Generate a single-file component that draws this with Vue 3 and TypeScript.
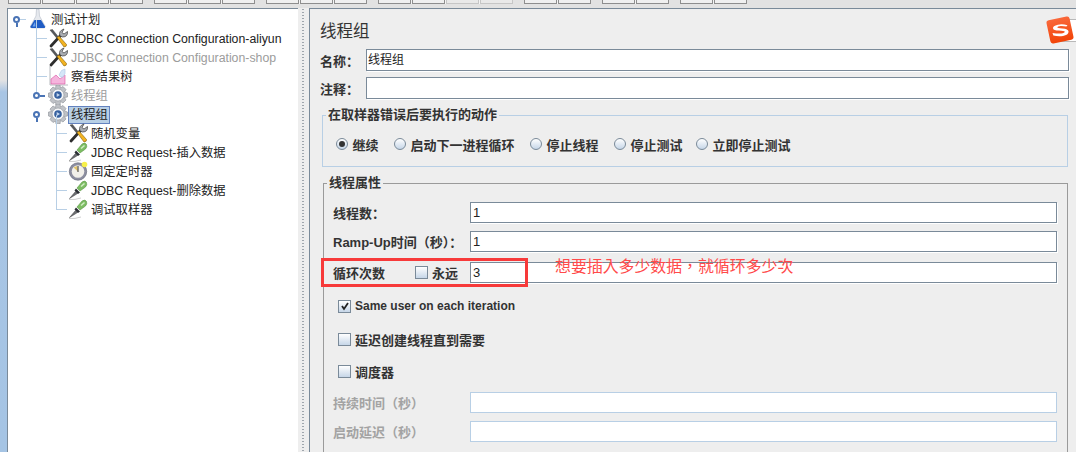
<script setup lang="ts">
interface Node { label: string; icon: string; level: number; muted?: boolean; selected?: boolean; handle?: string; last?: boolean }
const nodes: Node[] = [
  { label: '测试计划', icon: 'flask', level: 0, handle: 'open' },
  { label: 'JDBC Connection Configuration-aliyun', icon: 'tools', level: 1 },
  { label: 'JDBC Connection Configuration-shop', icon: 'tools', level: 1, muted: true },
  { label: '察看结果树', icon: 'chart', level: 1 },
  { label: '线程组', icon: 'gear', level: 1, muted: true, handle: 'closed' },
  { label: '线程组', icon: 'gear', level: 1, selected: true, handle: 'open' },
  { label: '随机变量', icon: 'tools', level: 2 },
  { label: 'JDBC Request-插入数据', icon: 'dropper', level: 2 },
  { label: '固定定时器', icon: 'timer', level: 2 },
  { label: 'JDBC Request-删除数据', icon: 'dropper', level: 2 },
  { label: '调试取样器', icon: 'dropper', level: 2, last: true },
]
const toolbarGroups = [
  [{}, {}, {}, {}],
  [{}, {}, {}],
  [{}, {}, {}],
  [{}, {}, { off: true }, { off: true }],
  [{}, {}],
  [{}, {}],
  [{}, {}],
] as { off?: boolean }[][]
const radios = [
  { label: '继续', on: true, width: 58 },
  { label: '启动下一进程循环', on: false, width: 136 },
  { label: '停止线程', on: false, width: 84 },
  { label: '停止测试', on: false, width: 82 },
  { label: '立即停止测试', on: false, width: 100 },
]
</script>

<template>
  <div class="app">
    <div class="toolbar">
      <div v-for="(g, i) in toolbarGroups" :key="i" class="tb-group">
        <div v-for="(b, j) in g" :key="j" class="tb-btn" :class="{ off: b.off }"></div>
      </div>
    </div>
    <div class="main">
      <div class="strip"></div>
      <div class="tree">
        <div
          v-for="(n, i) in nodes"
          :key="i"
          class="row"
          :class="['lv' + n.level, { last: n.last }]"
        >
          <span v-if="n.level > 0 && !(n.handle === 'open')" class="branch"></span>
          <span v-if="n.handle" class="handle" :class="n.handle"></span>
          <svg class="icon" viewBox="0 0 20 20" width="20" height="20">
            <g v-if="n.icon === 'flask'">
              <path d="M8.500 0h2.500l.5 7 5.500 10q.5 2-1 2H4q-2 0-1.500-2L8 7z" fill="#e6e9ee" stroke="#b4bbc6" stroke-width=".6" />
              <path d="M6.500 11h6.500l4 6.500q.5 1.500-1 1.500H4q-2 0-1.500-1.500z" fill="#1f5cc4" />
              <path d="M7 13l-2.500 4.500h3z" fill="#6fa5ee" />
            </g>
            <g v-else-if="n.icon === 'tools'">
              <path d="M3 18L13 7" stroke="#2e2e2e" stroke-width="2.800" stroke-linecap="round" />
              <path d="M12 8q-2-5 4-7l-2 3.500 2 1.500 3.500-2.500q.5 5.500-5 5.500z" fill="#a9adb3" stroke="#3c3c3c" stroke-width=".7" />
              <path d="M2 2l2.500-.5L10.500 9 9 10.500z" fill="#55585c" stroke="#333" stroke-width=".4" />
              <path d="M9 9.500l2-1.500 7.500 8.500q.5 2-2.500 2.500z" fill="#f3b320" stroke="#80600f" stroke-width=".6" />
            </g>
            <g v-else-if="n.icon === 'chart'">
              <path d="M2 0v19h18" fill="none" stroke="#a3a8ae" stroke-width=".8" />
              <path d="M3 18v-5l5-4 4 4 5-4v9z" fill="#f5b4dd" stroke="#d8509f" stroke-width=".6" />
              <path d="M11 9q2-6 6-6 1 5-2 8-3 1-4-2z" fill="#d5e6f8" stroke="#a7c2e0" stroke-width=".5" />
            </g>
            <g v-else-if="n.icon === 'gear'">
              <path d="M8 0h4l.5 3 2.500-1.500 3 3L16.500 7l3 1v4l-3 .5 1.500 2.500-3 3-2.500-1.500L12 20H8l-.5-3L5 18.500l-3-3L3.500 13l-3-1V8l3-.5L2 5l3-3 2.500 1.500z" fill="#bfc2c7" stroke="#8c9097" stroke-width=".6" />
              <circle cx="10" cy="10" r="6" fill="#f4f5f7" stroke="#8d9299" stroke-width=".6" />
              <circle cx="10" cy="10" r="3.800" fill="#35609f" />
              <path d="M8.700 8v4l3.300-2z" fill="#c3d5ee" />
            </g>
            <g v-else-if="n.icon === 'dropper'">
              <path d="M1 19.500q6 .5 12-1.500" fill="none" stroke="#cfcfcf" stroke-width="1" />
              <path d="M1.500 18.500l6-7 2 2z" fill="#6d6f73" stroke="#3a3a3a" stroke-width=".5" />
              <path d="M6.500 10.500l3.500 3.500 2-1.500-4-4z" fill="#2c2f34" />
              <path d="M9 8l5-6q3-2 4.500.5 1 2-1 4.500l-5.500 4z" fill="#7dbd63" stroke="#4d8a38" stroke-width=".5" />
              <path d="M12.500 6l3.500-3 1 1-3.500 3z" fill="#d3eec6" />
            </g>
            <g v-else>
              <circle cx="10" cy="10.500" r="8.700" fill="#8d8fa1" stroke="#6c6e7e" stroke-width=".7" />
              <circle cx="10" cy="10.500" r="6.300" fill="#f2f0ea" />
              <path d="M10 10.500L5.500 6.500 9 5z" fill="#e2c46a" />
              <path d="M10 5v6" stroke="#444" stroke-width="1.100" />
              <circle cx="16.500" cy="3.500" r="2.800" fill="#f7f04a" />
            </g>
          </svg>
          <span class="label" :class="{ muted: n.muted, selected: n.selected }">{{ n.label }}</span>
        </div>
      </div>
      <div class="splitter"></div>
      <div class="pane">
        <h1 class="title">线程组</h1>
        <div class="name-row">
          <label>名称：</label>
          <div class="input">线程组</div>
        </div>
        <div class="name-row second">
          <label>注释：</label>
          <div class="input"></div>
        </div>
        <fieldset class="group-a">
          <legend>在取样器错误后要执行的动作</legend>
          <div class="radios">
            <div v-for="r in radios" :key="r.label" class="radio" :style="{ width: r.width + 'px' }">
              <span class="dot" :class="{ on: r.on }"></span>{{ r.label }}
            </div>
          </div>
        </fieldset>
        <fieldset class="group-b">
          <legend>线程属性</legend>
          <div class="prop first">
            <label>线程数：</label>
            <div class="input num">1</div>
          </div>
          <div class="prop ramp">
            <label>Ramp-Up时间（秒）：</label>
            <div class="input num">1</div>
          </div>
          <div class="prop loop">
            <label class="loop-label"><span>循环次数</span><span class="forever"><span class="box"></span>永远</span></label>
            <div class="input num">3</div>
          </div>
          <div class="check c1"><span class="box checked"><svg viewBox="0 0 10 10" width="10" height="10"><path d="M2 5l2 3 4-6" fill="none" stroke="#222" stroke-width="1.800" /></svg></span><span class="latin">Same user on each iteration</span></div>
          <div class="check c2"><span class="box"></span>延迟创建线程直到需要</div>
          <div class="check c3"><span class="box"></span>调度器</div>
          <div class="prop dis first-dis">
            <label>持续时间（秒）</label>
            <div class="input"></div>
          </div>
          <div class="prop dis">
            <label>启动延迟（秒）</label>
            <div class="input"></div>
          </div>
        </fieldset>
      </div>
    </div>

    <div class="red-box"></div>
    <div class="note">想要插入多少数据，就循环多少次</div>
    <div class="ime-tab"></div>
    <svg class="ime" viewBox="0 0 28 28" width="30" height="30">
      <defs>
        <linearGradient id="imeGrad" x1="0" y1="0" x2="0" y2="1">
          <stop offset="0" stop-color="#f9683a" />
          <stop offset="1" stop-color="#f24408" />
        </linearGradient>
      </defs>
      <rect x="3" y="3" width="22" height="22" rx="2.500" fill="url(#imeGrad)" transform="rotate(-12 14 14)" />
      <path d="M21 9.500q-5-1.500-9-.5-5 1-4.500 3.500.5 2 5.500 2 5 .2 5.500 1.200 0 1.300-3.500 1.500-3.500.2-8-.5l.8 2.500q5 1 9 .3 5-.8 5.200-3.800 0-2.700-6-3-4.500-.3-4.500-1.200 0-1 3-1.200 2.500-.2 5.500.5z" fill="#fff" />
    </svg>
  </div>
</template>

<style>
html, body { margin: 0; padding: 0; background: #eeeeee; overflow: hidden; }
</style>

<style scoped>
.app {
  position: relative;
  width: 1076px;
  height: 452px;
  overflow: hidden;
  display: flex;
  flex-direction: column;
  background: #eeeeee;
  font-family: "Liberation Sans", "Noto Sans CJK SC", sans-serif;
  color: #222;
}
.toolbar {
  height: 8px;
  flex: none;
  display: flex;
  gap: 11px;
  padding-left: 8px;
  background: #e2e2e2;
  box-sizing: border-box;
}
.tb-group { display: flex; gap: 1px; height: 4px; background: #f4f4f4; }
.tb-btn {
  width: 33px;
  height: 4px;
  box-sizing: border-box;
  background: #f0f0f0;
  border: 1px solid #8e8e8e;
  border-top: none;
}
.tb-btn.off { border-color: #c6c6c6; background: #e9e9e9; }
.main { flex: 1; display: flex; min-height: 0; }
.strip {
  width: 7px;
  flex: none;
  background: linear-gradient(#e3e3e3 0, #e3e3e3 72px, #a8c5e4 84px, #a5c4e4 100%);
}
.tree {
  width: 291px;
  flex: none;
  box-sizing: border-box;
  background: #fff;
  border-top: 1px solid #7a8a99;
  border-left: 1px solid #7a8a99;
  padding-top: 1px;
}
.row {
  position: relative;
  height: 19px;
  display: flex;
  align-items: center;
  font-size: 12.300px;
  white-space: nowrap;
}
.lv0 { padding-left: 20px; }
.lv1 { padding-left: 40px; }
.lv2 { padding-left: 60px; }
.icon { flex: none; margin-top: -1px; }
.label { margin-left: 1px; padding: 1px; line-height: 14px; border: 1px solid transparent; }
.label.muted { color: #9c9c9c; }
.label.selected { background: #b8cfe5; border-color: #6382bf; margin-left: 0; padding-left: 2px; }
.branch { position: absolute; top: -9px; height: 19px; width: 11px; border-bottom: 1px solid #b8cfe5; border-left: 1px solid #b8cfe5; box-sizing: border-box; }
.lv1 .branch { left: 28px; }
.lv2 .branch { left: 48px; }
.row.lv1:nth-child(5) .branch { border-bottom: none; }
.handle { position: absolute; width: 3px; height: 3px; border: 2px solid #4a74b5; border-radius: 50%; background: #fff; top: 6px; box-sizing: content-box; }
.lv0 .handle { left: 5px; }
.lv1 .handle { left: 25px; }
.handle::before { content: ""; position: absolute; }
.handle.closed::before { left: 5px; top: .500px; width: 5px; height: 2px; background: #4a74b5; }
.handle.open::before { left: .500px; top: 5px; width: 2px; height: 4px; background: #4a74b5; }
.lv0 .handle.open::after { content: ""; position: absolute; left: 5px; top: 1px; width: 6px; height: 1px; background: #b8cfe5; }
.splitter {
  width: 11px;
  flex: none;
  box-sizing: border-box;
  background-color: #eeeeee;
  background-image: radial-gradient(circle, #9fa6ad 0.700px, transparent 0.800px);
  background-size: 2px 3px;
  background-position: 5px 0;
  background-repeat: repeat;
  clip-path: inset(0 5px 0 4px);
}
.pane {
  flex: 1;
  min-width: 0;
  box-sizing: border-box;
  border-top: 1px solid #7a8a99;
  border-left: 1px solid #7a8a99;
  padding: 0 7px 0 10px;
  color: #333;
  font-size: 13px;
  font-weight: 700;
}
.title { margin: 10px 0 0; height: 24px; line-height: 24px; font-size: 16.500px; font-weight: 400; }
.name-row { display: flex; align-items: center; height: 22px; margin-top: 6px; }
.name-row.second { margin-top: 6px; }
.name-row label { width: 46px; flex: none; }
.input {
  flex: 1;
  box-sizing: border-box;
  height: 100%;
  background: #fff;
  border: 1px solid #7a8a99;
  box-shadow: 1px 1px 0 #fff;
  padding-left: 1px;
  font-size: 12px;
  font-weight: 400;
  line-height: 20px;
  color: #222;
}
.num { font-size: 13px; padding-left: 2px; }
fieldset { margin: 0; min-width: 0; box-sizing: border-box; }
legend { padding: 0 2px; margin-left: 3px; font-size: 13px; line-height: 16px; font-weight: 700; }
.group-a {
  margin: 8px 1px 0 2px;
  height: 60px;
  border: 1px solid #b8cfe5;
  padding: 0;
}
.radios { display: flex; padding: 13px 0 0 13px; }
.radio { display: flex; align-items: center; gap: 4.500px; height: 16px; white-space: nowrap; flex: none; }
.dot {
  width: 10px; height: 10px; border-radius: 50%; flex: none;
  border: 1px solid #7a8a99;
  background: linear-gradient(#fff, #c6d6e8);
  display: flex; align-items: center; justify-content: center;
}
.dot.on::before { content: ""; width: 6px; height: 6px; border-radius: 50%; background: #333; }
.group-b {
  margin: 8px 1px 0 3px;
  height: 300px;
  border: 1px solid #9a9a9a;
  padding: 0 10px 0 9px;
}
.group-b legend { margin-left: -6px; }
.prop { display: flex; align-items: center; height: 21px; margin-top: 9px; }
.prop.first { margin-top: 11px; }
.prop.ramp { margin-top: 8px; }
.prop.loop { margin-top: 10px; }
.prop label { width: 137px; flex: none; white-space: nowrap; display: flex; }
.loop-label .forever { margin-left: 30px; display: flex; align-items: center; gap: 4px; }
.box {
  width: 11px; height: 11px; flex: none; display: flex; align-items: center; justify-content: center;
  border: 1px solid #7a8a99;
  background: linear-gradient(#fff, #c6d6e8);
}
.check { display: flex; align-items: center; gap: 4px; height: 16px; margin-left: 5px; white-space: nowrap; }
.check .latin { font-size: 12px; }
.c1 { margin-top: 15px; }
.c2 { margin-top: 17px; }
.c3 { margin-top: 16px; }
.prop.dis label { color: #a3a3a3; }
.prop.dis .input { border-color: #b8cfe5; box-shadow: none; }
.prop.dis { margin-top: 8px; }
.prop.first-dis { margin-top: 13px; }
.red-box {
  position: absolute;
  left: 321px; top: 258px;
  width: 207px; height: 29px;
  box-sizing: border-box;
  border: 3px solid #f73a3a;
}
.note {
  position: absolute;
  left: 555px; top: 255px;
  line-height: 22px;
  font-family: "Noto Sans CJK TC", "Noto Sans CJK SC", sans-serif;
  font-size: 15.900px;
  color: #ff4a4a;
  white-space: nowrap;
}
.ime-tab {
  position: absolute;
  left: 1060px; top: 19px;
  width: 16px; height: 23px;
  box-sizing: border-box;
  background: #fff;
  border: 1px solid #b9b9b9;
  border-right: none;
}
.ime { position: absolute; left: 1045px; top: 15px; }
</style>
